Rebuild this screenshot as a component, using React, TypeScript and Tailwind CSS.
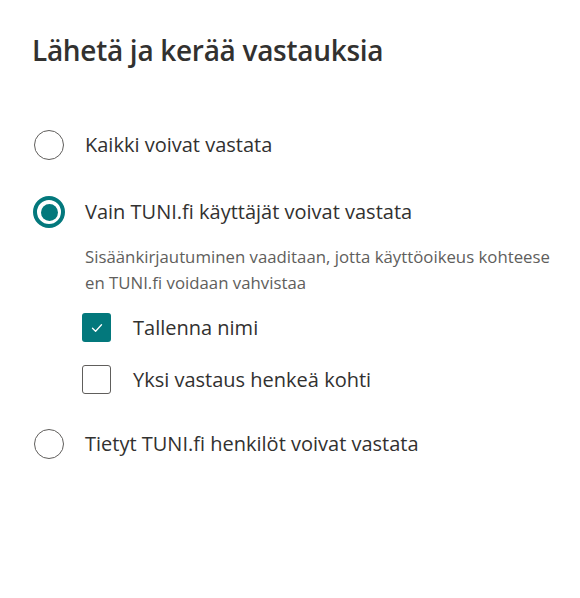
import { useState } from 'react'

const FONT = { fontFamily: '"Open Sans", "Noto Sans", "Liberation Sans", sans-serif' }

function Radio({ checked }: { checked: boolean }) {
  return (
    <span className="flex h-8 w-8 shrink-0 items-center justify-center">
      {checked ? (
        <span className="flex h-8 w-8 items-center justify-center rounded-full border-[4px] border-[#03787c] bg-white">
          <span className="h-[17px] w-[17px] rounded-full bg-[#03787c]" />
        </span>
      ) : (
        <span className="h-[30px] w-[30px] rounded-full border-[1.5px] border-[#605e5c] bg-white" />
      )}
    </span>
  )
}

function Checkbox({ checked }: { checked: boolean }) {
  return checked ? (
    <span className="flex h-[29px] w-[29px] shrink-0 items-center justify-center rounded-[3px] bg-[#03787c]">
      <svg width="14" height="14" viewBox="0 0 14 14" fill="none">
        <path d="M2.5 7.2 5.6 10.2 11.5 3.8" stroke="white" strokeWidth="1.3" strokeLinecap="round" strokeLinejoin="round" />
      </svg>
    </span>
  ) : (
    <span className="h-[29px] w-[29px] shrink-0 rounded-[3px] border-[1.5px] border-[#605e5c] bg-white" />
  )
}

export default function App() {
  const [choice, setChoice] = useState(1)
  const [saveName, setSaveName] = useState(true)
  const [oneReply, setOneReply] = useState(false)

  return (
    <div className="min-h-[598px] w-[580px] bg-white pl-[33px] pt-[30px] text-[#323130]" style={FONT}>
      <h1 className="-ml-[1px] text-[28px] font-semibold leading-[40px] tracking-[-0.3px]">Lähetä ja kerää vastauksia</h1>

      <div className="mt-[59px] flex flex-col">
        <button onClick={() => setChoice(0)} className="flex items-center gap-5 text-left">
          <Radio checked={choice === 0} />
          <span className="text-[20px] leading-8">Kaikki voivat vastata</span>
        </button>

        <button onClick={() => setChoice(1)} className="mt-[35px] flex items-center gap-5 text-left">
          <Radio checked={choice === 1} />
          <span className="text-[20px] leading-8">Vain TUNI.fi käyttäjät voivat vastata</span>
        </button>

        <p className="ml-[52px] mt-4 whitespace-nowrap text-[16.8px] leading-[26px] text-[#605e5c]">
          Sisäänkirjautuminen vaaditaan, jotta käyttöoikeus kohteese
          <br />
          en TUNI.fi voidaan vahvistaa
        </p>

        <button onClick={() => setSaveName(!saveName)} className="ml-[49px] mt-[17px] flex items-center gap-[22px] text-left">
          <Checkbox checked={saveName} />
          <span className="text-[20px] leading-[29px]">Tallenna nimi</span>
        </button>

        <button onClick={() => setOneReply(!oneReply)} className="ml-[49px] mt-[23px] flex items-center gap-[22px] text-left">
          <Checkbox checked={oneReply} />
          <span className="text-[20px] leading-[29px]">Yksi vastaus henkeä kohti</span>
        </button>

        <button onClick={() => setChoice(2)} className="mt-[34px] flex items-center gap-5 text-left">
          <Radio checked={choice === 2} />
          <span className="text-[20px] leading-8">Tietyt TUNI.fi henkilöt voivat vastata</span>
        </button>
      </div>
    </div>
  )
}
